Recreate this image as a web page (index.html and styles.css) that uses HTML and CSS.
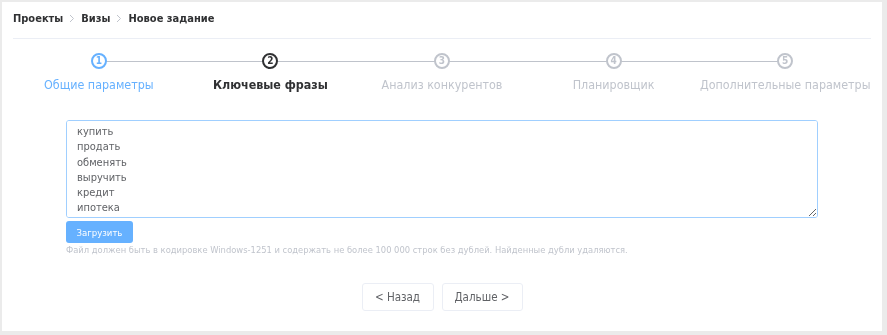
FILE: index.html
```html
<!DOCTYPE html>
<html lang="ru">
<head>
    <meta charset="UTF-8">
    <title>Новое задание</title>
    <link rel="stylesheet" href="styles.css">
</head>
<body>
    <div class="panel">
        <div class="crumbs">
            <span>Проекты</span>
            <svg class="sep" width="6" height="9" viewBox="0 0 6 9"><path d="M1 1l3.5 3.5L1 8" fill="none" stroke="#c0c4cc" stroke-width="1"/></svg>
            <span>Визы</span>
            <svg class="sep" width="6" height="9" viewBox="0 0 6 9"><path d="M1 1l3.5 3.5L1 8" fill="none" stroke="#c0c4cc" stroke-width="1"/></svg>
            <span>Новое задание</span>
        </div>

        <div class="steps">
            <div class="step done">
                <div class="step-head"><span class="num">1</span></div>
                <div class="step-title">Общие параметры</div>
            </div>
            <div class="step current">
                <div class="step-head"><span class="num">2</span></div>
                <div class="step-title">Ключевые фразы</div>
            </div>
            <div class="step">
                <div class="step-head"><span class="num">3</span></div>
                <div class="step-title">Анализ конкурентов</div>
            </div>
            <div class="step">
                <div class="step-head"><span class="num">4</span></div>
                <div class="step-title">Планировщик</div>
            </div>
            <div class="step last">
                <div class="step-head"><span class="num">5</span></div>
                <div class="step-title">Дополнительные параметры</div>
            </div>
        </div>

        <div class="form">
            <textarea class="phrases">купить
продать
обменять
выручить
кредит
ипотека</textarea>
            <button class="btn-upload">Загрузить</button>
            <div class="hint">Файл должен быть в кодировке Windows-1251 и содержать не более 100 000 строк без дублей. Найденные дубли удаляются.</div>
        </div>

        <div class="nav">
            <button class="btn">&lt; Назад</button>
            <button class="btn">Дальше &gt;</button>
        </div>
    </div>
</body>
</html>
```

FILE: styles.css
```css
body {
    margin: 0;
    padding: 2px 5px 4px 2px;
    background-color: #ebebeb;
    font-family: "DejaVu Sans Condensed", "DejaVu Sans", Verdana, sans-serif;
}
.panel {
    background-color: #fff;
    height: 329px;
    padding: 0 11px;
    box-sizing: border-box;
}
.crumbs {
    display: flex;
    align-items: center;
    gap: 6px;
    height: 33px;
    padding-bottom: 3px;
    border-bottom: 1px solid #ebeef5;
    font-size: 11px;
    font-weight: bold;
    color: #303133;
}
.steps {
    display: grid;
    grid-template-columns: repeat(5, 1fr);
    margin-top: 14px;
}
.step {
    display: flex;
    flex-direction: column;
    align-items: center;
    color: #c0c4cc;
}
.step-head {
    position: relative;
    width: 100%;
    display: flex;
    justify-content: center;
}
.step-head::after {
    content: "";
    position: absolute;
    left: 50%;
    right: -50%;
    top: 8px;
    height: 1px;
    background-color: #bfc3cb;
}
.step.last .step-head::after {
    display: none;
}
.num {
    position: relative;
    z-index: 1;
    width: 16px;
    height: 16px;
    box-sizing: border-box;
    border: 2px solid #c0c4cc;
    border-radius: 50%;
    background-color: #fff;
    font-size: 10px;
    font-weight: bold;
    line-height: 12px;
    text-align: center;
}
.step-title {
    margin-top: 8px;
    font-size: 12.4px;
    white-space: nowrap;
}
.step.done {
    color: #66b1ff;
}
.step.done .num {
    border-color: #66b1ff;
}
.step.current {
    color: #303133;
}
.step.current .num {
    border-color: #303133;
}
.step.current .step-title {
    font-weight: bold;
}
.form {
    padding: 28px 53px 0;
}
.phrases {
    display: block;
    width: 100%;
    height: 98px;
    box-sizing: border-box;
    padding: 3px 10px;
    border: 1px solid #a0cfff;
    border-radius: 3px;
    font-family: "DejaVu Sans Condensed", "DejaVu Sans", Verdana, sans-serif;
    font-size: 11px;
    line-height: 15.3px;
    color: #606266;
    resize: vertical;
    outline: none;
}
.btn-upload {
    display: block;
    margin-top: 3px;
    width: 67px;
    height: 22px;
    padding: 0;
    border: none;
    border-radius: 3px;
    background-color: #66b1ff;
    color: #fff;
    font-family: "DejaVu Sans Condensed", "DejaVu Sans", Verdana, sans-serif;
    font-size: 9.5px;
}
.hint {
    margin-top: 1px;
    font-size: 9.3px;
    color: #c0c4cc;
}
.nav {
    display: flex;
    justify-content: center;
    gap: 8px;
    margin-top: 28px;
}
.btn {
    height: 28px;
    padding: 0;
    border: 1px solid #ebeef5;
    border-radius: 3px;
    background-color: #fff;
    color: #606266;
    font-family: "DejaVu Sans Condensed", "DejaVu Sans", Verdana, sans-serif;
    font-size: 11.5px;
    white-space: nowrap;
}
.nav .btn:first-child {
    width: 72px;
}
.nav .btn:last-child {
    width: 81px;
}
```
